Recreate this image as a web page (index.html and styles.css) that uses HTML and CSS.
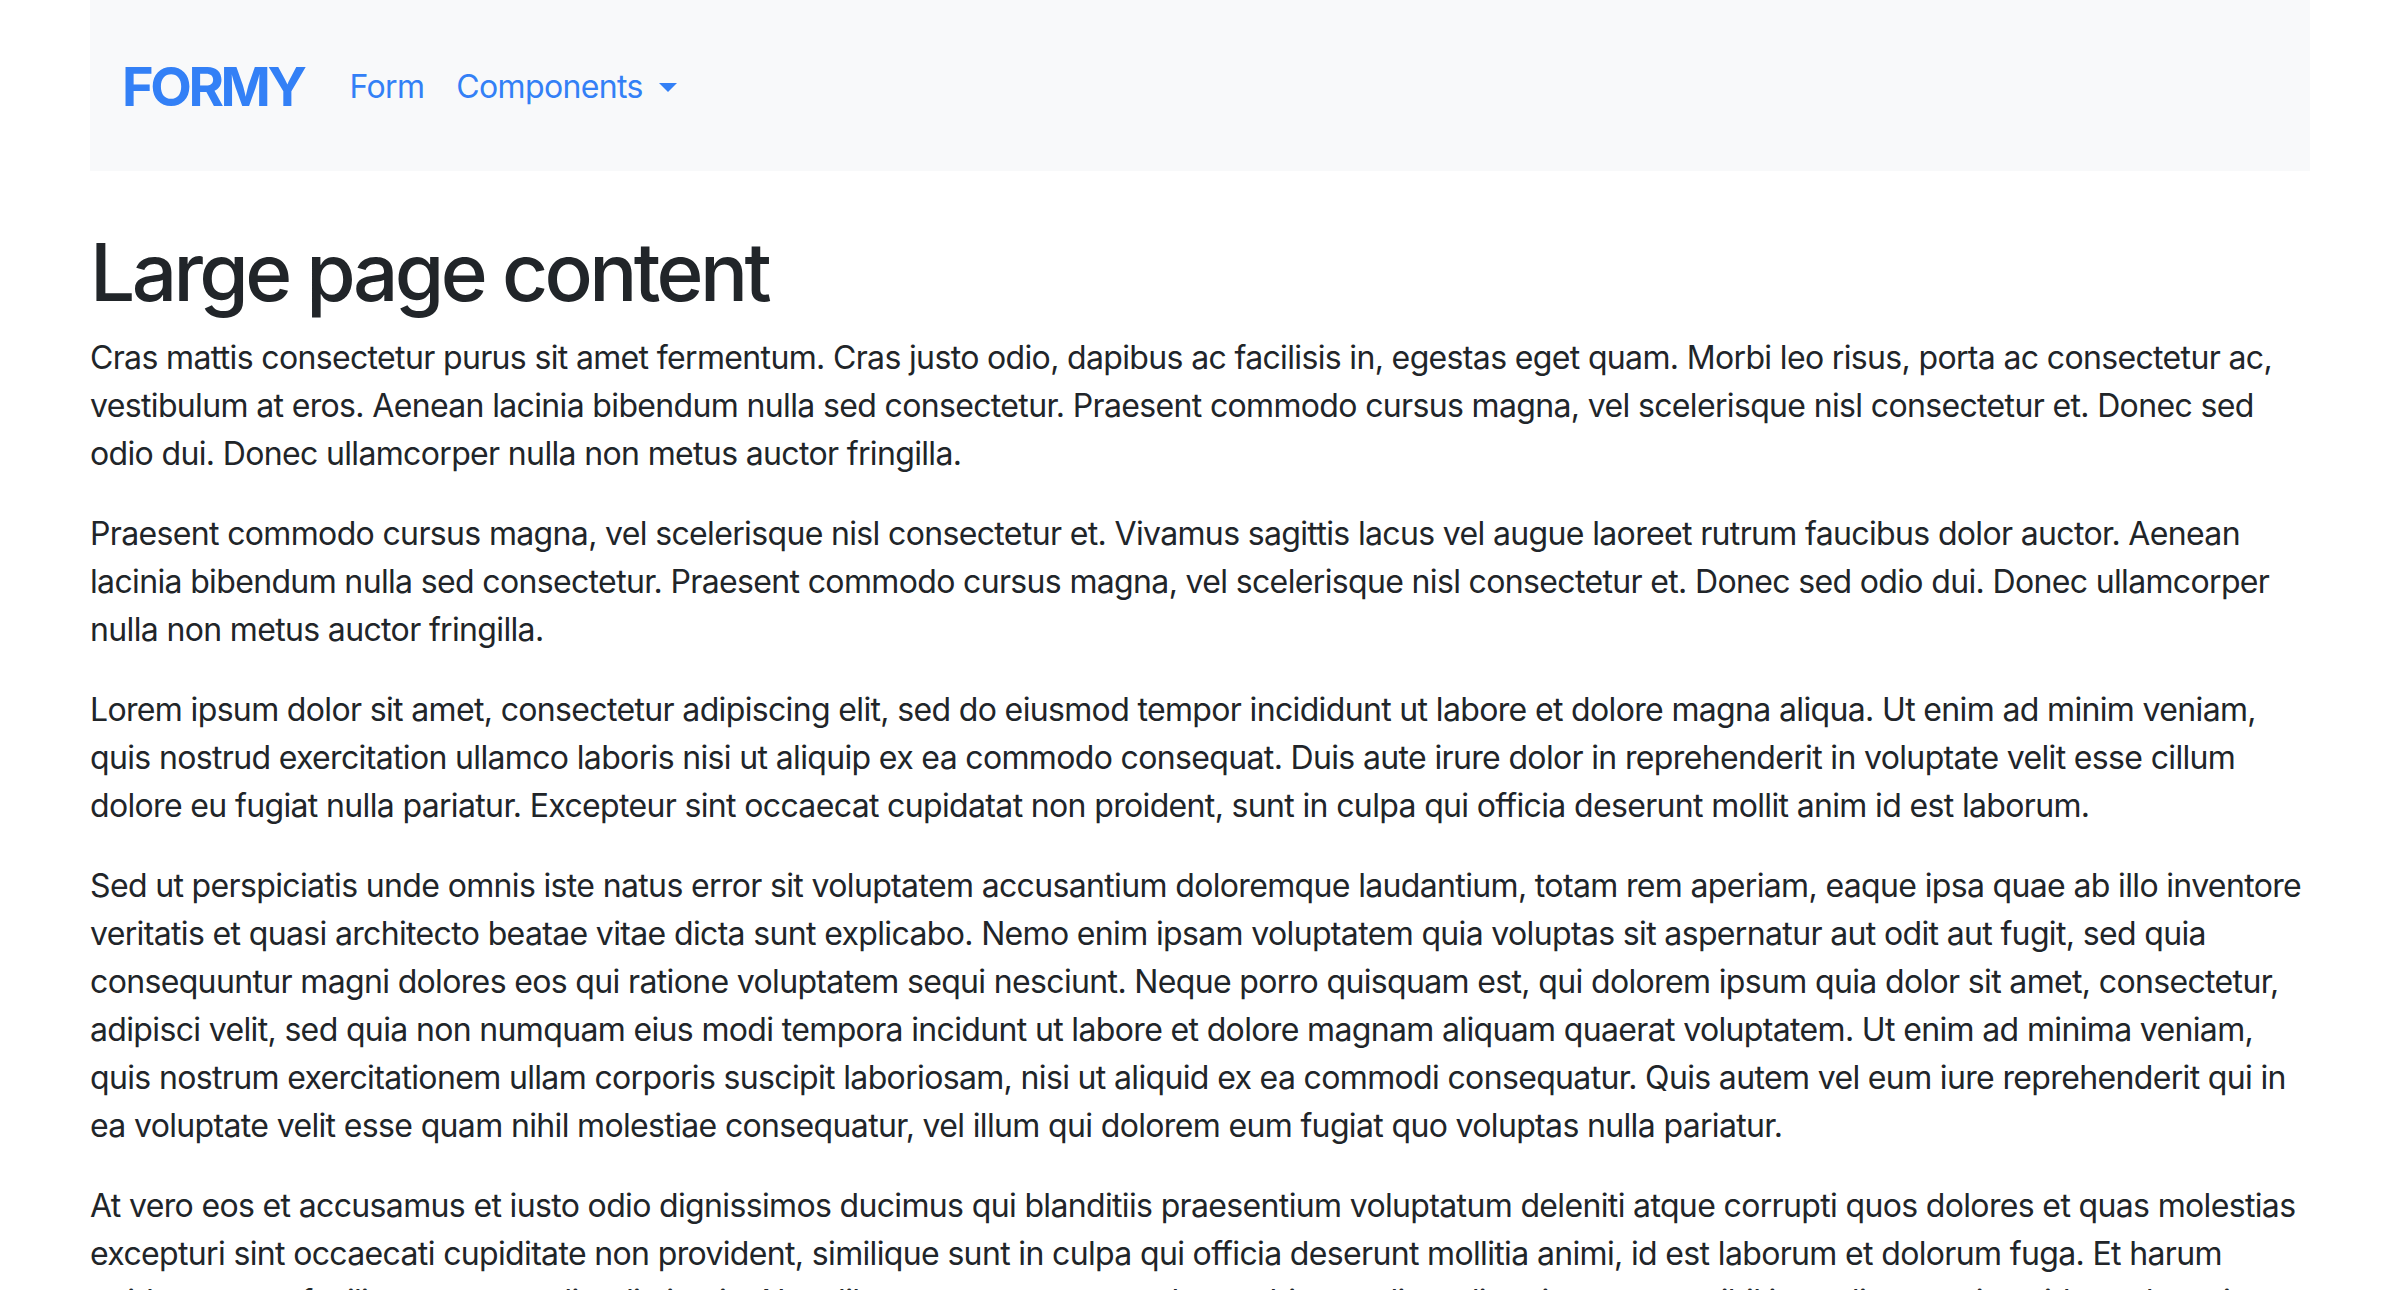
FILE: index.html
```html
<!DOCTYPE html>
<html lang="en">
<head>
<meta charset="utf-8">
<title>Formy - Large page content</title>
<link rel="stylesheet" href="styles.css">
</head>
<body>
<div class="container">
  <nav class="navbar">
    <a class="brand" href="#">FORMY</a>
    <ul class="nav">
      <li><a class="nav-link" href="#">Form</a></li>
      <li><a class="nav-link dropdown-toggle" href="#">Components<span class="caret"></span></a></li>
    </ul>
  </nav>
  <main class="content">
    <h1>Large page content</h1>
    <p>Cras mattis consectetur purus sit amet fermentum. Cras justo odio, dapibus ac facilisis in, egestas eget quam. Morbi leo risus, porta ac consectetur ac, vestibulum at eros. Aenean lacinia bibendum nulla sed consectetur. Praesent commodo cursus magna, vel scelerisque nisl consectetur et. Donec sed odio dui. Donec ullamcorper nulla non metus auctor fringilla.</p>
    <p>Praesent commodo cursus magna, vel scelerisque nisl consectetur et. Vivamus sagittis lacus vel augue laoreet rutrum faucibus dolor auctor. Aenean lacinia bibendum nulla sed consectetur. Praesent commodo cursus magna, vel scelerisque nisl consectetur et. Donec sed odio dui. Donec ullamcorper nulla non metus auctor fringilla.</p>
    <p>Lorem ipsum dolor sit amet, consectetur adipiscing elit, sed do eiusmod tempor incididunt ut labore et dolore magna aliqua. Ut enim ad minim veniam, quis nostrud exercitation ullamco laboris nisi ut aliquip ex ea commodo consequat. Duis aute irure dolor in reprehenderit in voluptate velit esse cillum dolore eu fugiat nulla pariatur. Excepteur sint occaecat cupidatat non proident, sunt in culpa qui officia deserunt mollit anim id est laborum.</p>
    <p>Sed ut perspiciatis unde omnis iste natus error sit voluptatem accusantium doloremque laudantium, totam rem aperiam, eaque ipsa quae ab illo inventore veritatis et quasi architecto beatae vitae dicta sunt explicabo. Nemo enim ipsam voluptatem quia voluptas sit aspernatur aut odit aut fugit, sed quia consequuntur magni dolores eos qui ratione voluptatem sequi nesciunt. Neque porro quisquam est, qui dolorem ipsum quia dolor sit amet, consectetur, adipisci velit, sed quia non numquam eius modi tempora incidunt ut labore et dolore magnam aliquam quaerat voluptatem. Ut enim ad minima veniam, quis nostrum exercitationem ullam corporis suscipit laboriosam, nisi ut aliquid ex ea commodi consequatur. Quis autem vel eum iure reprehenderit qui in ea voluptate velit esse quam nihil molestiae consequatur, vel illum qui dolorem eum fugiat quo voluptas nulla pariatur.</p>
    <p>At vero eos et accusamus et iusto odio dignissimos ducimus qui blanditiis praesentium voluptatum deleniti atque corrupti quos dolores et quas molestias excepturi sint occaecati cupiditate non provident, similique sunt in culpa qui officia deserunt mollitia animi, id est laborum et dolorum fuga. Et harum quidem rerum facilis est et expedita distinctio. Nam libero tempore, cum soluta nobis est eligendi optio cumque nihil impedit quo minus id quod maxime placeat facere possimus, omnis voluptas assumenda est, omnis dolor repellendus.</p>
  </main>
</div>
</body>
</html>
```

FILE: styles.css
```css
html, body {
  margin: 0;
  padding: 0;
  background: #ffffff;
}

body {
  font-family: Inter, "Noto Sans", "Liberation Sans", sans-serif;
  color: #212529;
  font-size: 32px;
  line-height: 48px;
  letter-spacing: -0.65px;
}

.container {
  width: 2220px;
  margin: 0 auto;
}

.navbar {
  display: flex;
  align-items: center;
  height: 171px;
  padding: 3px 32px 0;
  background: #f8f9fa;
  box-sizing: border-box;
}

.brand {
  font-size: 54px;
  font-weight: 700;
  line-height: 84px;
  color: #3380f6;
  text-decoration: none;
  margin-right: 30px;
  letter-spacing: -3.4px;
}

.nav {
  display: flex;
  list-style: none;
  margin: 0;
  padding: 0;
}

.nav-link {
  display: flex;
  align-items: center;
  padding: 0 16px;
  font-size: 32px;
  line-height: 48px;
  color: #3380f6;
  text-decoration: none;
}

.caret {
  display: inline-block;
  margin-left: 16px;
  width: 0;
  height: 0;
  border-top: 9px solid #3380f6;
  border-left: 9px solid transparent;
  border-right: 9px solid transparent;
}

.content {
  padding-top: 53px;
}

h1 {
  font-size: 80px;
  font-weight: 500;
  line-height: 96px;
  margin: 0 0 14px;
  letter-spacing: -3.6px;
}

p {
  margin: 0 0 32px;
}
```
